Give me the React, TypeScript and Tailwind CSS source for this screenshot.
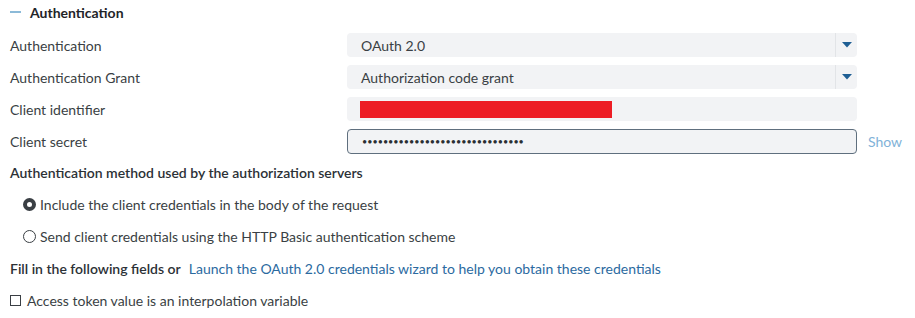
import { useState } from 'react';

const rows = [
  { label: 'Authentication', kind: 'select', value: 'OAuth 2.0' },
  { label: 'Authentication Grant', kind: 'select', value: 'Authorization code grant' },
  { label: 'Client identifier', kind: 'redacted', value: '' },
  { label: 'Client secret', kind: 'secret', value: '' },
];

const methods = [
  'Include the client credentials in the body of the request',
  'Send client credentials using the HTTP Basic authentication scheme',
];

const Caret = () => (
  <svg width="10" height="6" viewBox="0 0 10 6" className="block">
    <path d="M0 0h10L5 5.5z" fill="#1f5f94" />
  </svg>
);

const App = () => {
  const [method, setMethod] = useState(0);
  const [interp, setInterp] = useState(false);

  return (
    <div
      className="w-[915px] h-[318px] bg-white pl-[10px] text-[14px] text-[#3a3f44] overflow-hidden"
      style={{ fontFamily: 'Lato, "Open Sans", sans-serif' }}
    >
      {/* Section header */}
      <div className="h-[24px] flex items-center">
        <span className="w-[11px] h-[2px] bg-[#8cbad8] mr-[9px]" />
        <span className="font-bold text-[#1f2428]">Authentication</span>
      </div>

      {/* Field rows */}
      <div className="mt-[9px] flex flex-col gap-2">
        {rows.map((row) => (
          <div key={row.label} className="flex items-center h-6">
            <div className="w-[337px] shrink-0">{row.label}</div>
            {row.kind === 'select' && (
              <div className="w-[510px] h-6 rounded bg-[#f2f3f5] flex items-center">
                <span className="flex-1 pl-[14px] text-[#3a3f44]">{row.value}</span>
                <span className="w-px h-6 bg-[#e2e4e7]" />
                <span className="w-[21px] flex justify-center">
                  <Caret />
                </span>
              </div>
            )}
            {row.kind === 'redacted' && (
              <div className="w-[510px] h-6 rounded bg-[#f2f3f5] flex items-center pl-[13px]">
                <span className="w-[252px] h-[17px] bg-[#ed1c24]" />
              </div>
            )}
            {row.kind === 'secret' && (
              <>
                <div className="w-[510px] h-[25px] rounded-[4px] bg-[#f2f3f5] border border-[#5f6f7e] flex items-center pl-[14px]">
                  <span className="text-[9px] tracking-normal text-[#2a2f33] leading-none">
                    {'•'.repeat(31)}
                  </span>
                </div>
                <span className="ml-[11px] text-[#7fb2d8]">Show</span>
              </>
            )}
          </div>
        ))}
      </div>

      {/* Method */}
      <div className="mt-[3px]">
        <div className="h-8 flex items-center font-semibold text-[#2c3136]">
          Authentication method used by the authorization servers
        </div>
        {methods.map((m, i) => (
          <div
            key={m}
            className="h-8 flex items-center pl-[13px] cursor-pointer"
            onClick={() => setMethod(i)}
          >
            <span
              className={
                method === i
                  ? 'w-[13px] h-[13px] rounded-full border-[4px] border-[#3a3f44] bg-white mr-[4px]'
                  : 'w-[13px] h-[13px] rounded-full border-[1.5px] border-[#3a3f44] bg-white mr-[4px]'
              }
            />
            <span>{m}</span>
          </div>
        ))}
        <div className="h-8 flex items-center">
          <span className="font-semibold text-[#2c3136]">Fill in the following fields or</span>
          <span className="ml-[8px] text-[#2b6a9f]">
            Launch the OAuth 2.0 credentials wizard to help you obtain these credentials
          </span>
        </div>
        <div className="h-8 flex items-center cursor-pointer" onClick={() => setInterp(!interp)}>
          <span
            className={
              interp
                ? 'w-[11px] h-[11px] border-[1.5px] border-[#3a3f44] bg-[#3a3f44] mr-[6px]'
                : 'w-[11px] h-[11px] border-[1.5px] border-[#3a3f44] bg-white mr-[6px]'
            }
          />
          <span>Access token value is an interpolation variable</span>
        </div>
      </div>
    </div>
  );
};

export default App;
